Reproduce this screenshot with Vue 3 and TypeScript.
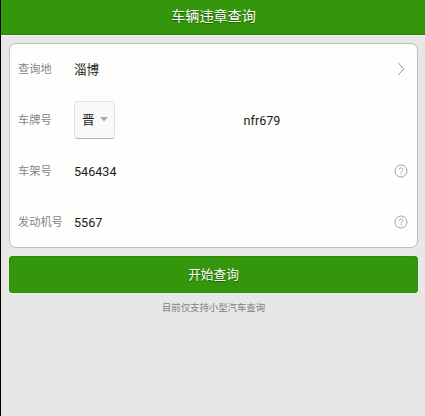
<script setup lang="ts">
import { ref } from 'vue'

const city = ref('淄博')
const province = ref('晋')
const plate = ref('nfr679')
const fields = ref([
  { label: '车架号', value: '546434' },
  { label: '发动机号', value: '5567' },
])
</script>

<template>
  <div class="page">
    <header class="title-bar">车辆违章查询</header>
    <main class="content">
      <section class="card">
        <div class="row">
          <span class="label">查询地</span>
          <span class="value city">{{ city }}</span>
          <svg class="chevron" width="8" height="14" viewBox="0 0 8 14">
            <path d="M1 0.8 L6.8 7 L1 13.2" fill="none" stroke="#999" stroke-width="1" />
          </svg>
        </div>
        <div class="row">
          <span class="label">车牌号</span>
          <button class="province" type="button">
            <span>{{ province }}</span>
            <svg width="8" height="5" viewBox="0 0 8 5"><path d="M0 0H8L4 4.6Z" fill="#aaa" /></svg>
          </button>
          <span class="plate">{{ plate }}</span>
        </div>
        <div v-for="field in fields" :key="field.label" class="row">
          <span class="label">{{ field.label }}</span>
          <span class="value">{{ field.value }}</span>
          <svg class="help" width="14" height="14" viewBox="0 0 14 14" fill="none" stroke="#999" stroke-width="0.9">
            <circle cx="7" cy="7" r="6" />
            <path d="M5.2 5.6C5.2 3.3 8.9 3.3 8.9 5.5C8.9 6.8 7.1 6.9 7.1 8.5M7.1 9.5V10.6" />
          </svg>
        </div>
      </section>
      <button class="submit" type="button">开始查询</button>
      <p class="note">目前仅支持小型汽车查询</p>
    </main>
  </div>
</template>

<style>
body {
  background: #e7e7e6;
}
</style>

<style scoped>
.page {
  box-sizing: border-box;
  height: 416px;
  border-left: 1px solid #000;
  background: #e7e7e6;
  font-family: Roboto, "Noto Sans CJK SC", sans-serif;
  color: #1c1c1c;
}
.title-bar {
  box-sizing: border-box;
  height: 35px;
  padding-left: 1px;
  border-bottom: 1px solid #2d7d12;
  box-shadow: 0 1px 0 #f8f4fa;
  background: #34960b;
  color: #fff;
  font-size: 14.1px;
  line-height: 32px;
  text-align: center;
  text-shadow: 0 1px 1px rgba(0, 0, 0, 0.4);
}
.content {
  padding: 8px 7px 0 8px;
}
.card {
  box-sizing: border-box;
  height: 205px;
  border: 1px solid #bdbdbd;
  border-radius: 7px;
  background: #fefefd;
}
.row {
  display: flex;
  align-items: center;
  height: 51px;
  padding: 0 9px 0 8px;
}
.row:first-child {
  height: 50px;
}
.label {
  flex: none;
  width: 56px;
  padding-bottom: 2px;
  color: #858585;
  font-size: 11.2px;
}
.value {
  flex: 1;
  padding-top: 1px;
  font-size: 12.6px;
}
.value.city {
  padding: 0 0 2px;
}
.chevron {
  margin-right: 3px;
}
.province {
  box-sizing: border-box;
  display: flex;
  align-items: center;
  justify-content: space-between;
  width: 41px;
  height: 38px;
  padding: 0 6px 0 7px;
  border: 1px solid #e2e2e2;
  border-bottom-color: #b5b5b5;
  border-radius: 4px;
  background: #f9f9f9;
  color: #1c1c1c;
  font: inherit;
  font-size: 12.6px;
}
.province span {
  padding-bottom: 2px;
}
.plate {
  flex: 1;
  padding: 1px 0 0 1px;
  font-size: 12.6px;
  text-align: center;
}
.submit {
  display: block;
  width: 100%;
  height: 37px;
  margin-top: 8px;
  padding: 0 0 3px;
  border: 1px solid #279008;
  border-radius: 3px;
  box-shadow: 0 0 0 1px #f0e8f2;
  background: #34960b;
  color: #fff;
  font: inherit;
  font-size: 12.7px;
  text-shadow: 0 1px 1px rgba(0, 0, 0, 0.4);
}
.note {
  margin: 7px 0 0;
  color: #808080;
  font-size: 9.4px;
  line-height: 16px;
  text-align: center;
}
</style>
